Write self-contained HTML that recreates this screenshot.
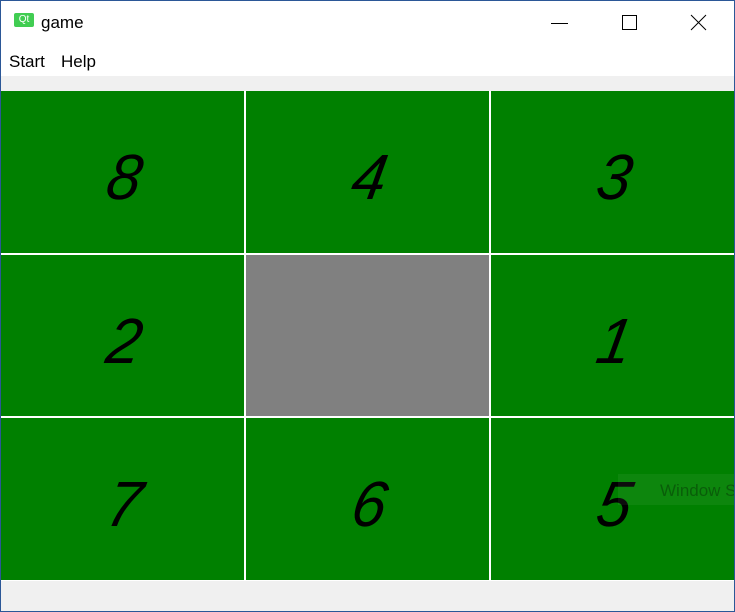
<!DOCTYPE html><html><head><style>
body{margin:0;width:735px;height:612px;overflow:hidden;background:#fff;font-family:"Liberation Sans",sans-serif;position:relative}
.b{position:absolute;left:0;top:0;width:733px;height:610px;border:1px solid #2b5797}
.t{position:absolute;left:41px;top:13px;font-size:17px}
.qt{position:absolute;left:14px;top:13px;width:20px;height:14px;background:#41cd52;border-radius:2px;color:#fff;font-size:10px;text-align:center;line-height:14px}
.m{position:absolute;top:52px;font-size:17px}
.tb{position:absolute;left:1px;top:76px;width:733px;height:15px;background:#f0f0f0}
.c{position:absolute;background:#008000;font-style:italic;font-size:64px;text-align:center;font-family:"Liberation Sans",sans-serif;line-height:172px}
.c span{display:inline-block;transform:skewX(-10deg) scaleX(0.95);margin-left:4px}
.sb{position:absolute;left:1px;top:581px;width:733px;height:30px;background:#f0f0f0}
</style></head><body>
<div class="b"></div>
<div class="qt">Qt</div><div class="t">game</div>
<svg style="position:absolute;left:550px;top:14px" width="170" height="20"><line x1="1" y1="9.5" x2="18" y2="9.5" stroke="#000"/><rect x="72.5" y="1.5" width="14" height="14" fill="none" stroke="#000"/><path d="M141 1L156 16M156 1L141 16" stroke="#000"/></svg>
<div class="m" style="left:9px">Start</div><div class="m" style="left:61px">Help</div>
<div class="tb"></div>
<div style="position:absolute;left:1px;top:91px;width:733px;height:490px;background:#fff"></div>
<div class="c" style="left:1px;top:91px;width:243px;height:162px"><span>8</span></div>
<div class="c" style="left:246px;top:91px;width:243px;height:162px"><span>4</span></div>
<div class="c" style="left:491px;top:91px;width:243px;height:162px"><span>3</span></div>
<div class="c" style="left:1px;top:255px;width:243px;height:161px"><span>2</span></div>
<div class="c" style="left:246px;top:255px;width:243px;height:161px;background:#808080"></div>
<div class="c" style="left:491px;top:255px;width:243px;height:161px"><span>1</span></div>
<div class="c" style="left:1px;top:418px;width:243px;height:162px"><span>7</span></div>
<div class="c" style="left:246px;top:418px;width:243px;height:162px"><span>6</span></div>
<div class="c" style="left:491px;top:418px;width:243px;height:162px"><span>5</span></div>
<div style="position:absolute;left:618px;top:474px;width:116px;height:31px;background:rgba(255,255,255,0.05);color:rgba(0,0,0,0.3);font-size:17px;line-height:33px;padding-left:42px;box-sizing:border-box;overflow:hidden;white-space:nowrap">Window S</div>
<div class="sb"></div>
</body></html>
